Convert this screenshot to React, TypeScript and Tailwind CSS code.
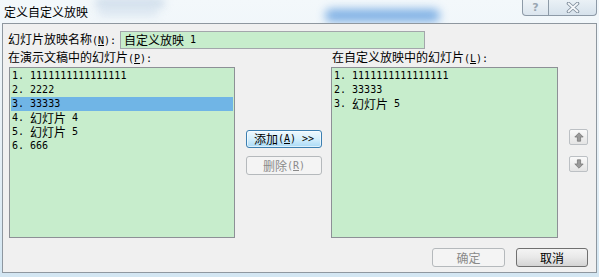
import React from 'react'

// ascii run: SimSun-like half-width (6px per char)
function A({ children }: { children: React.ReactNode }) {
  return <span className="font-['DejaVu_Sans_Mono',monospace] text-[10px]">{children}</span>
}

function Key({ k }: { k: string }) {
  return (
    <A>
      (<span className="underline">{k}</span>)
    </A>
  )
}

function Row({ n, text, sel }: { n: number; text: string; sel?: boolean }) {
  const parts = text.match(/[\x00-\x7f]+|[^\x00-\x7f]+/g) || []
  return (
    <div className={`h-[14px] leading-[14px] pl-[1px] whitespace-pre flex items-center overflow-hidden ${sel ? 'bg-[#70b5e6]' : ''}`}>
      <A>{n}. </A>
      {parts.map((p, i) => (/^[\x00-\x7f]/.test(p) ? <A key={i}>{p}</A> : <span key={i}>{p}</span>))}
    </div>
  )
}

function Arrow({ down }: { down?: boolean }) {
  return (
    <svg width="10" height="10" viewBox="0 0 10 10" className={down ? 'rotate-180' : ''}>
      <polygon points="5,0.8 9.2,5 6.6,5 6.6,9.2 3.4,9.2 3.4,5 0.8,5" fill="#9a9a9a" stroke="#7a7a7a" strokeWidth="0.8" strokeLinejoin="round" />
    </svg>
  )
}

export default function App() {
  const left = ['1111111111111111', '2222', '33333', '幻灯片 4', '幻灯片 5', '666']
  const right = ['1111111111111111', '33333', '幻灯片 5']

  const list = "h-[171px] border border-[#8d9096] bg-[#c7edcc] p-[1px]"
  const btnOff = "flex items-center justify-center rounded-[3px] border border-[#b5b9bc] bg-[#f4f4f4] text-[#8a8a8a]"

  return (
    <div className="relative w-[599px] h-[277px] overflow-hidden bg-gradient-to-b from-[#f3f8fb] via-[#e8f1f7] to-[#d3e6f2] font-['Noto_Sans_CJK_SC',sans-serif] text-[12px] text-black">
      {/* glass blur behind the caption */}
      <div className="absolute left-[325px] top-[9px] w-[115px] h-[13px] rounded-md bg-[#4f93dc] opacity-70 blur-[5px]" />
      <div className="absolute left-[95px] top-[-2px] w-[70px] h-[10px] rounded-md bg-[#b9cde2] opacity-60 blur-[4px]" />
      <div className="absolute left-[98px] top-[8px] w-[60px] h-[8px] rounded-md bg-[#c6d6e8] opacity-50 blur-[4px]" />

      <div className="relative h-[23px] pl-[4px] flex items-center leading-none">定义自定义放映</div>

      {/* caption buttons */}
      <div className="absolute top-0 right-[2px] flex">
        <div className="w-[27px] h-[16px] rounded-bl-[4px] border border-t-0 border-[#8d9aa7] bg-gradient-to-b from-[#eef3f7] to-[#dbe5ee] flex items-center justify-center text-[11px] font-bold text-[#9aa6b2] leading-none font-['DejaVu_Sans',sans-serif]">?</div>
        <div className="w-[48px] h-[16px] rounded-br-[4px] border border-l-0 border-t-0 border-[#8d9aa7] bg-gradient-to-b from-[#eaf1f6] to-[#d6e2ec] flex items-center justify-center">
          <svg width="14" height="11" viewBox="0 0 14 11">
            <path d="M2.5 1.5 L11.5 9.5 M11.5 1.5 L2.5 9.5" stroke="#7f8d9b" strokeWidth="3.6" strokeLinecap="round" />
            <path d="M2.5 1.5 L11.5 9.5 M11.5 1.5 L2.5 9.5" stroke="#f4f7fa" strokeWidth="1.8" strokeLinecap="round" />
          </svg>
        </div>
      </div>

      <div className="relative ml-[2px] w-[595px] h-[250px] border border-[#8e979f] bg-[#f0f0f0] pt-[7px] pl-[5px]">
        <div className="flex items-center h-[18px]">
          <div className="w-[112px] whitespace-pre leading-[14px]">幻灯片放映名称<Key k="N" /><A>:</A></div>
          <div className="w-[305px] h-[18px] border border-[#a3a6ab] bg-[#c7edcc] pl-[3px] flex items-center whitespace-pre leading-[14px]">
            <span>自定义放映</span><A> 1</A>
          </div>
        </div>

        <div className="flex h-[18px] items-center leading-[14px] whitespace-pre">
          <div className="w-[324px]">在演示文稿中的幻灯片<Key k="P" /><A>:</A></div>
          <div>在自定义放映中的幻灯片<Key k="L" /><A>:</A></div>
        </div>

        <div className="flex">
          <div className={`ml-[1px] w-[226px] ${list}`}>
            {left.map((t, i) => <Row key={i} n={i + 1} text={t} sel={i === 2} />)}
          </div>

          <div className="ml-[11px] w-[76px] flex flex-col">
            <div className="mt-[63px] h-[18px] rounded-[3px] border border-[#3c7fb1] bg-gradient-to-b from-[#eef8fe] via-[#d5effc] to-[#a9daf6] shadow-[inset_0_0_0_1px_rgba(255,255,255,0.6)] flex items-center justify-center whitespace-pre leading-[14px]">
              添加<Key k="A" /><A> &gt;&gt;</A>
            </div>
            <div className={`mt-[8px] h-[19px] whitespace-pre leading-[14px] ${btnOff}`}>
              删除<Key k="R" />
            </div>
          </div>

          <div className={`ml-[9px] w-[227px] ${list}`}>
            {right.map((t, i) => <Row key={i} n={i + 1} text={t} />)}
          </div>

          <div className="ml-[11px] w-[19px] flex flex-col">
            <div className="mt-[62px] h-[16px] rounded-[2px] border border-[#bcc0c4] bg-gradient-to-b from-[#fafafa] to-[#e4e4e4] flex items-center justify-center">
              <Arrow />
            </div>
            <div className="mt-[11px] h-[16px] rounded-[2px] border border-[#bcc0c4] bg-gradient-to-b from-[#fafafa] to-[#e4e4e4] flex items-center justify-center">
              <Arrow down />
            </div>
          </div>
        </div>

        <div className="mt-[10px] mr-[8px] flex justify-end">
          <div className={`w-[73px] h-[19px] ${btnOff}`}>确定</div>
          <div className="ml-[11px] w-[72px] h-[19px] rounded-[3px] border border-[#707070] bg-gradient-to-b from-[#f4f4f4] via-[#e8e8e8] to-[#d4d4d4] flex items-center justify-center">取消</div>
        </div>
      </div>
    </div>
  )
}
